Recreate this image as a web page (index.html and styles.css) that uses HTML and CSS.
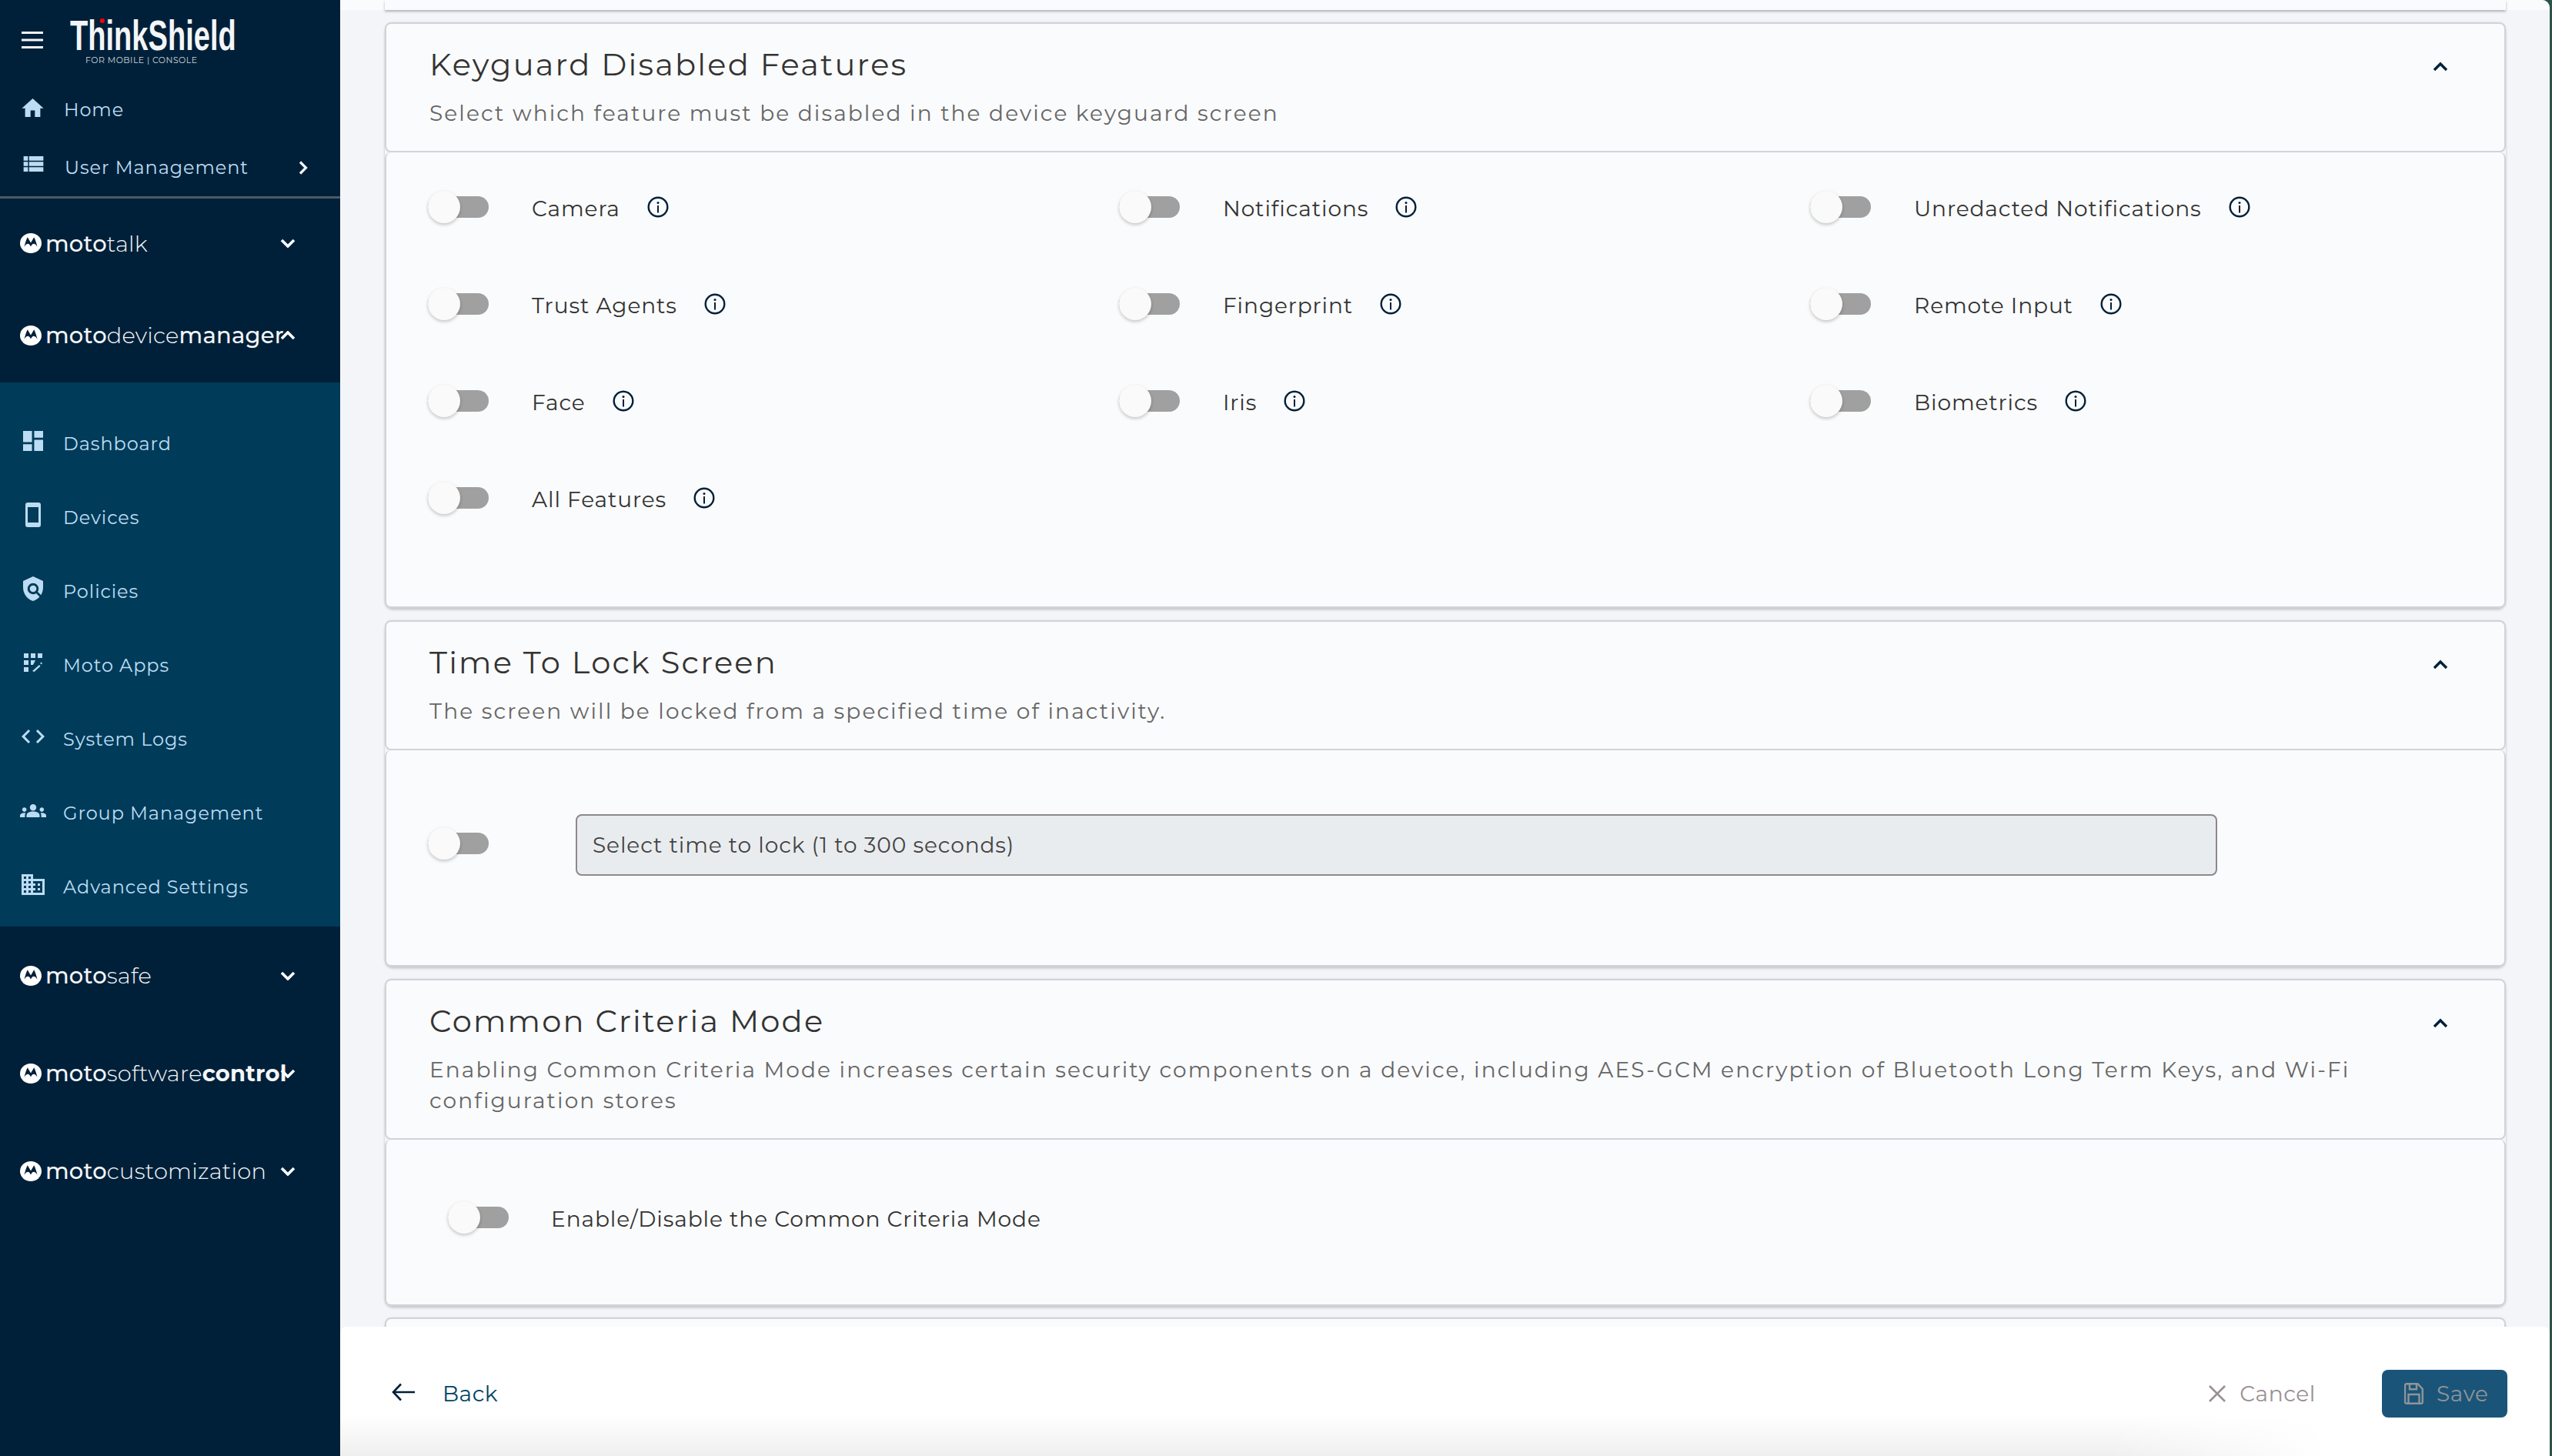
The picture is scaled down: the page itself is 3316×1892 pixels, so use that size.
FILE: index.html
```html
<!DOCTYPE html>
<html lang="en">
<head>
<meta charset="utf-8">
<title>Keyguard settings</title>
<link rel="stylesheet" href="styles.css">
</head>
<body>
<svg class="defs" width="0" height="0" aria-hidden="true">
  <symbol id="moto" viewBox="0 0 28 26">
    <ellipse cx="14" cy="13" rx="14" ry="13" fill="#fff"/>
    <path fill="#002039" d="M5.5 18C6.5 13.5 8 8.5 9.8 5.2L14 12.5l4.200-7.300C20 8.500 21.500 13.500 22.500 18 21 15 19.300 13.700 17.900 13.700 16 13.700 15 15.500 14 17.500 13 15.500 12 13.700 10.100 13.700 8.700 13.700 7 15 5.500 18Z"/>
  </symbol>
  <symbol id="info" viewBox="0 0 28 28">
    <circle cx="14" cy="14" r="12.300" fill="none" stroke="#002039" stroke-width="2.400"/>
    <circle cx="14" cy="8.500" r="1.500" fill="#002039"/>
    <path d="M14 12v9.500" stroke="#002039" stroke-width="2"/>
  </symbol>
  <symbol id="chev-down" viewBox="0 0 20 12">
    <path d="M2 2l8 8 8-8" fill="none" stroke="#fff" stroke-width="3.600"/>
  </symbol>
  <symbol id="chev-up" viewBox="0 0 20 12">
    <path d="M2 10l8-8 8 8" fill="none" stroke="#fff" stroke-width="3.600"/>
  </symbol>
  <symbol id="chev-up-dark" viewBox="0 0 20 12">
    <path d="M2 10.500l8-8 8 8" fill="none" stroke="#002039" stroke-width="3.400"/>
  </symbol>
</svg>

<div class="app">
  <aside class="sidebar">
    <div class="brand">
      <svg class="burger" viewBox="0 0 28 22"><path d="M0 1.500h28M0 11h28M0 20.500h28" stroke="#f4f5f7" stroke-width="3"/></svg>
      <div class="logo">
        <div class="logo-word">ThinkShield<span class="logo-dot"></span></div>
        <div class="logo-sub">FOR MOBILE | CONSOLE</div>
      </div>
    </div>

    <a class="nav-top">
      <svg class="ico ico-home" viewBox="2 3 20 17"><path d="M10 20v-6h4v6h5v-8h3L12 3 2 12h3v8z"/></svg>
      <span>Home</span>
    </a>
    <a class="nav-top">
      <svg class="ico ico-list" viewBox="3 5 18 14"><path d="M3 14h4v-4H3v4zm0 5h4v-4H3v4zM3 9h4V5H3v4zm5 5h13v-4H8v4zm0 5h13v-4H8v4zM8 5v4h13V5H8z"/></svg>
      <span>User Management</span>
      <svg class="chev-right" viewBox="0 0 12 18"><path d="M2 1.500l7.500 7.500L2 16.500" fill="none" stroke="#f4f5f7" stroke-width="3.200"/></svg>
    </a>
    <div class="divider"></div>

    <div class="product product-a">
      <svg class="moto"><use href="#moto"/></svg>
      <span class="pname"><b>moto</b>talk</span>
      <svg class="chev"><use href="#chev-down"/></svg>
    </div>
    <div class="product product-b">
      <svg class="moto"><use href="#moto"/></svg>
      <span class="pname"><b>moto</b>device<b>manager</b></span>
      <svg class="chev"><use href="#chev-up"/></svg>
    </div>

    <nav class="subnav">
      <a class="nav-sub">
        <span class="ico-slot"><svg class="ico ico-dash" viewBox="3 3 18 18"><path d="M3 13h8V3H3v10zm0 8h8v-6H3v6zm10 0h8V11h-8v10zm0-18v6h8V3h-8z"/></svg></span>
        <span>Dashboard</span>
      </a>
      <a class="nav-sub">
        <span class="ico-slot"><svg class="ico ico-phone" viewBox="0 0 20 32"><path fill-rule="evenodd" d="M3 0h14a3 3 0 0 1 3 3v26a3 3 0 0 1-3 3H3a3 3 0 0 1-3-3V3a3 3 0 0 1 3-3zm0 6v20h14V6z"/></svg></span>
        <span>Devices</span>
      </a>
      <a class="nav-sub">
        <span class="ico-slot"><svg class="ico ico-policy" viewBox="3 1 18 22"><path d="M21 5l-9-4-9 4v6c0 5.550 3.840 10.740 9 12 2.300-.560 4.330-1.900 5.880-3.710l-3.120-3.120c-1.940 1.290-4.580 1.070-6.290-.640-1.950-1.950-1.950-5.120 0-7.070 1.950-1.950 5.120-1.950 7.070 0 1.710 1.710 1.920 4.350.640 6.290l2.900 2.900C20.290 15.690 21 13.380 21 11V5z"/><circle cx="12" cy="12" r="3"/></svg></span>
        <span>Policies</span>
      </a>
      <a class="nav-sub">
        <span class="ico-slot"><svg class="ico ico-apps" viewBox="0 0 24 24"><path d="M0 0h6v6H0zM9 0h6v6H9zM18 0h6v6h-6zM0 9h6v6H0zM9 9h6l-3 6H9zM0 18h6v6H0z"/><path d="M11 23l9-8 1.500 1.700-8 7.300zM21 12.500l1.500-1 1.500 1.500-1 1.500z"/></svg></span>
        <span>Moto Apps</span>
      </a>
      <a class="nav-sub">
        <span class="ico-slot"><svg class="ico ico-code" viewBox="2 6 20 12"><path d="M9.400 16.600L4.800 12l4.600-4.600L8 6l-6 6 6 6 1.400-1.400zm5.200 0l4.600-4.600-4.600-4.600L16 6l6 6-6 6-1.400-1.400z"/></svg></span>
        <span>System Logs</span>
      </a>
      <a class="nav-sub">
        <span class="ico-slot"><svg class="ico ico-group" viewBox="0 6 24 12"><path d="M12 12.750c1.630 0 3.070.390 4.240.900 1.080.480 1.760 1.560 1.760 2.730V18H6v-1.610c0-1.180.680-2.260 1.760-2.730 1.170-.520 2.610-.910 4.240-.910zM4 13c1.100 0 2-.900 2-2s-.900-2-2-2-2 .900-2 2 .900 2 2 2zm1.130 1.100c-.370-.060-.740-.100-1.130-.100-.990 0-1.930.210-2.780.580C.480 14.900 0 15.620 0 16.430V18h4.500v-1.610c0-.830.230-1.610.630-2.290zM20 13c1.100 0 2-.900 2-2s-.900-2-2-2-2 .900-2 2 .900 2 2 2zm4 3.430c0-.810-.480-1.530-1.220-1.850-.850-.370-1.790-.580-2.780-.580-.390 0-.760.040-1.130.100.400.680.630 1.460.630 2.290V18H24v-1.570zM12 6c1.660 0 3 1.340 3 3s-1.340 3-3 3-3-1.340-3-3 1.340-3 3-3z"/></svg></span>
        <span>Group Management</span>
      </a>
      <a class="nav-sub">
        <span class="ico-slot"><svg class="ico ico-domain" viewBox="2 3 20 18"><path d="M12 7V3H2v18h20V7H12zM6 19H4v-2h2v2zm0-4H4v-2h2v2zm0-4H4V9h2v2zm0-4H4V5h2v2zm4 12H8v-2h2v2zm0-4H8v-2h2v2zm0-4H8V9h2v2zm0-4H8V5h2v2zm10 12h-8v-2h2v-2h-2v-2h2v-2h-2V9h8v10zm-2-8h-2v2h2v-2zm0 4h-2v2h2v-2z"/></svg></span>
        <span>Advanced Settings</span>
      </a>
    </nav>

    <div class="product product-c">
      <svg class="moto"><use href="#moto"/></svg>
      <span class="pname"><b>moto</b>safe</span>
      <svg class="chev"><use href="#chev-down"/></svg>
    </div>
    <div class="product product-c">
      <svg class="moto"><use href="#moto"/></svg>
      <span class="pname"><b>moto</b>software<strong>control</strong></span>
      <svg class="chev"><use href="#chev-down"/></svg>
    </div>
    <div class="product product-c">
      <svg class="moto"><use href="#moto"/></svg>
      <span class="pname"><b>moto</b>customization</span>
      <svg class="chev"><use href="#chev-down"/></svg>
    </div>
  </aside>

  <main class="main">
    <div class="scroller">
      <div class="top-stub"><div class="top-card"></div></div>

      <section class="card">
        <header class="card-head">
          <div class="head-text">
            <h2>Keyguard Disabled Features</h2>
            <p>Select which feature must be disabled in the device keyguard screen</p>
          </div>
          <svg class="head-chev"><use href="#chev-up-dark"/></svg>
        </header>
        <div class="card-body body-features">
          <div class="feature"><span class="toggle"><i></i></span><label>Camera</label><svg class="info"><use href="#info"/></svg></div>
          <div class="feature"><span class="toggle"><i></i></span><label>Notifications</label><svg class="info"><use href="#info"/></svg></div>
          <div class="feature"><span class="toggle"><i></i></span><label>Unredacted Notifications</label><svg class="info"><use href="#info"/></svg></div>
          <div class="feature"><span class="toggle"><i></i></span><label>Trust Agents</label><svg class="info"><use href="#info"/></svg></div>
          <div class="feature"><span class="toggle"><i></i></span><label>Fingerprint</label><svg class="info"><use href="#info"/></svg></div>
          <div class="feature"><span class="toggle"><i></i></span><label>Remote Input</label><svg class="info"><use href="#info"/></svg></div>
          <div class="feature"><span class="toggle"><i></i></span><label>Face</label><svg class="info"><use href="#info"/></svg></div>
          <div class="feature"><span class="toggle"><i></i></span><label>Iris</label><svg class="info"><use href="#info"/></svg></div>
          <div class="feature"><span class="toggle"><i></i></span><label>Biometrics</label><svg class="info"><use href="#info"/></svg></div>
          <div class="feature"><span class="toggle"><i></i></span><label>All Features</label><svg class="info"><use href="#info"/></svg></div>
        </div>
      </section>

      <section class="card">
        <header class="card-head">
          <div class="head-text">
            <h2>Time To Lock Screen</h2>
            <p>The screen will be locked from a specified time of inactivity.</p>
          </div>
          <svg class="head-chev"><use href="#chev-up-dark"/></svg>
        </header>
        <div class="card-body body-lock">
          <span class="toggle"><i></i></span>
          <div class="fake-input">Select time to lock (1 to 300 seconds)</div>
        </div>
      </section>

      <section class="card">
        <header class="card-head">
          <div class="head-text">
            <h2>Common Criteria Mode</h2>
            <p>Enabling Common Criteria Mode increases certain security components on a device, including AES-GCM encryption of Bluetooth Long Term Keys, and Wi-Fi<br>configuration stores</p>
          </div>
          <svg class="head-chev"><use href="#chev-up-dark"/></svg>
        </header>
        <div class="card-body body-common">
          <span class="toggle"><i></i></span>
          <label>Enable/Disable the Common Criteria Mode</label>
        </div>
      </section>

      <section class="card card-next">
        <header class="card-head"></header>
      </section>
    </div>

    <footer class="footer">
      <a class="back">
        <svg class="back-arrow" viewBox="0 0 30 24"><path d="M12 1.500L2 12l10 10.500M2.500 12H30" fill="none" stroke="#002039" stroke-width="2.600"/></svg>
        <span>Back</span>
      </a>
      <div class="actions">
        <a class="cancel">
          <svg class="cancel-x" viewBox="0 0 22 22"><path d="M1 1l20 20M21 1L1 21" stroke="#9a9193" stroke-width="2.600"/></svg>
          <span>Cancel</span>
        </a>
        <button class="save" type="button">
          <svg class="save-ico" viewBox="0 0 25 28"><path d="M3 1.200h14.500l6.300 6.800v16.800a2 2 0 0 1-2 2H3a2 2 0 0 1-2-2V3.200a2 2 0 0 1 2-2zM7 1.200v7h9v-7M5.500 26.800V15h14v11.800" fill="none" stroke="#8f9499" stroke-width="2.400"/></svg>
          <span>Save</span>
        </button>
      </div>
    </footer>
  </main>
</div>
</body>
</html>
```
FILE: styles.css
```css
* { box-sizing: border-box; }
html, body { margin: 0; height: 100%; }
body {
  font-family: Montserrat, Inter, "Liberation Sans", sans-serif;
  background: #2c5446;
  overflow: hidden;
}
.defs { position: absolute; }
.app { display: flex; height: 100vh; }

/* sidebar */
.sidebar {
  width: 442px;
  flex: none;
  background: #002039;
  color: #bcdcf3;
  font-size: 24px;
}
.brand {
  height: 105px;
  display: flex;
  align-items: flex-start;
  padding: 41px 0 0 28px;
}
.burger { width: 28px; height: 22px; flex: none; }
.logo { margin: -17px 0 0 35px; width: 156px; }
.logo-word {
  position: relative;
  font-family: "Liberation Sans Narrow", "Liberation Sans", sans-serif;
  font-weight: 700;
  font-size: 56px;
  line-height: 44px;
  height: 44px;
  color: #f4f5f7;
  white-space: nowrap;
  transform: scaleX(.68);
  transform-origin: left top;
}
.logo-dot {
  position: absolute;
  left: 57px;
  top: 0;
  width: 9px;
  height: 6px;
  border-radius: 50%;
  background: #f00;
}
.logo-sub {
  margin: 3px 0 0 20px;
  font-size: 11px;
  line-height: 14px;
  color: #cfd6dc;
  white-space: nowrap;
  letter-spacing: .45px;
}
.nav-top {
  height: 75px;
  display: flex;
  align-items: center;
  padding-left: 28px;
  letter-spacing: .9px;
}
.nav-top span { margin-left: 26px; }
.ico { fill: #bcdcf3; display: block; }
.ico-home { width: 29px; height: 24px; flex: none; margin-top: -6px; }
.ico-list { width: 27px; height: 20px; flex: none; margin: -10px 0 0 2px; }
.nav-top .ico-list + span { margin-left: 27px; }
.chev-right { width: 12px; height: 18px; margin-left: auto; margin-right: 42px; }
.divider { height: 3px; background: #4c5a62; }

.product { display: flex; align-items: center; padding-left: 26px; color: #f4f6f8; }
.product-a { height: 116px; }
.product-b { height: 123px; }
.product-c { height: 127px; }
.moto { width: 28px; height: 26px; flex: none; }
.pname {
  margin-left: 5px;
  font-size: 29px;
  font-weight: 300;
  letter-spacing: .2px;
  white-space: nowrap;
}
.pname b { font-weight: 500; }
.pname strong { font-weight: 700; }
.chev { width: 20px; height: 12px; position: absolute; left: 364px; }

.subnav {
  background: #003b59;
  height: 707px;
  padding-top: 31px;
}
.nav-sub {
  height: 96px;
  display: flex;
  align-items: center;
  letter-spacing: .9px;
}
.ico-slot {
  width: 82px;
  display: flex;
  justify-content: center;
  padding-right: 0;
  margin-top: -6px;
  flex: none;
}
.ico-dash { width: 26px; height: 26px; margin-left: 4px; }
.ico-phone { width: 20px; height: 32px; margin-left: 4px; }
.ico-policy { width: 26px; height: 32px; margin-left: 4px; }
.ico-apps { width: 24px; height: 24px; margin-left: 4px; }
.ico-code { width: 30px; height: 18px; margin-left: 4px; }
.ico-group { width: 34px; height: 17px; margin-left: 4px; }
.ico-domain { width: 30px; height: 27px; margin-left: 4px; }

/* main */
.main {
  flex: 1;
  min-width: 0;
  margin-right: 3px;
  background: #f3f5f8;
  border-top-right-radius: 10px;
  display: flex;
  flex-direction: column;
  overflow: hidden;
}
.scroller { height: 1724px; overflow: hidden; flex: none; }
.top-stub { height: 13px; background: #fafbfc; }
.top-card {
  height: 13px;
  margin: 0 57px 0 58px;
  background: #fafbfc;
  box-shadow: 0 2px 3px rgba(0, 0, 0, .28);
  position: relative;
}
.card {
  margin: 16px 57px 0 58px;
  border-radius: 10px;
  box-shadow: 0 3px 3px rgba(0, 0, 0, .14), 0 0 3px rgba(0, 0, 0, .1);
}
.card-next { margin-top: 15px; }
.card-next .card-head { height: 60px; }
.card-head {
  background: #fafbfc;
  border: 2px solid #cfd4d8;
  border-radius: 8px;
  padding: 29px 73px 29px 56px;
  display: flex;
  justify-content: space-between;
  align-items: flex-start;
}
.card-head h2 {
  margin: 0;
  font-size: 40px;
  line-height: 48px;
  font-weight: 400;
  color: #333;
  letter-spacing: 2.2px;
}
.card-head p {
  margin: 19px 0 0;
  font-size: 28px;
  line-height: 40px;
  color: #666;
  letter-spacing: 2.1px;
}
.head-chev { width: 20px; height: 13px; flex: none; margin-top: 20px; }
.card-body {
  background: #fafbfc;
  border: 2px solid #cfd4d8;
  border-top: 0;
  border-radius: 8px;
}
.body-features {
  display: grid;
  grid-template-columns: repeat(3, 898px);
  grid-auto-rows: 126px;
  height: 592px;
  padding: 10px 0 0 54px;
}
.feature { display: flex; align-items: center; }
.toggle {
  position: relative;
  display: block;
  width: 79px;
  height: 28px;
  flex: none;
  border-radius: 14px;
  background: #a0a0a0;
  margin-top: -4px;
  clip-path: none;
}
.toggle i {
  position: absolute;
  left: 0;
  top: -7px;
  width: 42px;
  height: 42px;
  border-radius: 50%;
  background: #fafafa;
  box-shadow: 0 2px 4px rgba(0, 0, 0, .22);
}
label {
  font-size: 28px;
  line-height: 40px;
  color: #333;
  letter-spacing: .9px;
  white-space: nowrap;
}
.feature label { margin-left: 56px; }
.info { width: 28px; height: 28px; flex: none; margin: -4px 0 0 35px; }
.body-lock {
  display: flex;
  align-items: center;
  height: 281px;
  padding: 84px 0 117px 54px;
}
.fake-input {
  width: 2133px;
  height: 80px;
  margin-left: 113px;
  padding-left: 20px;
  display: flex;
  align-items: center;
  font-size: 28px;
  letter-spacing: .9px;
  color: #444;
  background: #e9ecef;
  border: 2px solid #8e888b;
  border-radius: 8px;
}
.body-common {
  display: flex;
  align-items: center;
  height: 216px;
  padding: 0 0 8px 80px;
}
.body-common label { margin-left: 55px; }

/* footer */
.footer {
  flex: 1;
  display: flex;
  justify-content: space-between;
  align-items: flex-start;
  padding: 56px 55px 0 67px;
  border-radius: 8px 8px 0 0;
  background:
    linear-gradient(to right, rgba(255, 255, 255, 0) 80%, #fff 90%),
    linear-gradient(to top, #efefef, #fff 32%);
  position: relative;
}
.back, .cancel, .actions, .save { display: flex; align-items: center; }
.back { height: 62px; font-size: 28px; color: #004564; letter-spacing: .5px; }
.back-arrow { width: 30px; height: 24px; margin-top: -4px; }
.back span { margin-left: 36px; }
.cancel { height: 62px; font-size: 28px; color: #9a9193; letter-spacing: .6px; }
.cancel-x { width: 22px; height: 22px; }
.cancel span { margin-left: 18px; }
.save {
  margin-left: 86px;
  width: 163px;
  height: 62px;
  padding: 0 0 0 29px;
  border: 0;
  border-radius: 8px;
  background: #1a5579;
  color: #8f9499;
  font: inherit;
  font-size: 28px;
  letter-spacing: .6px;
}
.save-ico { width: 25px; height: 28px; }
.save span { margin-left: 17px; }
```
